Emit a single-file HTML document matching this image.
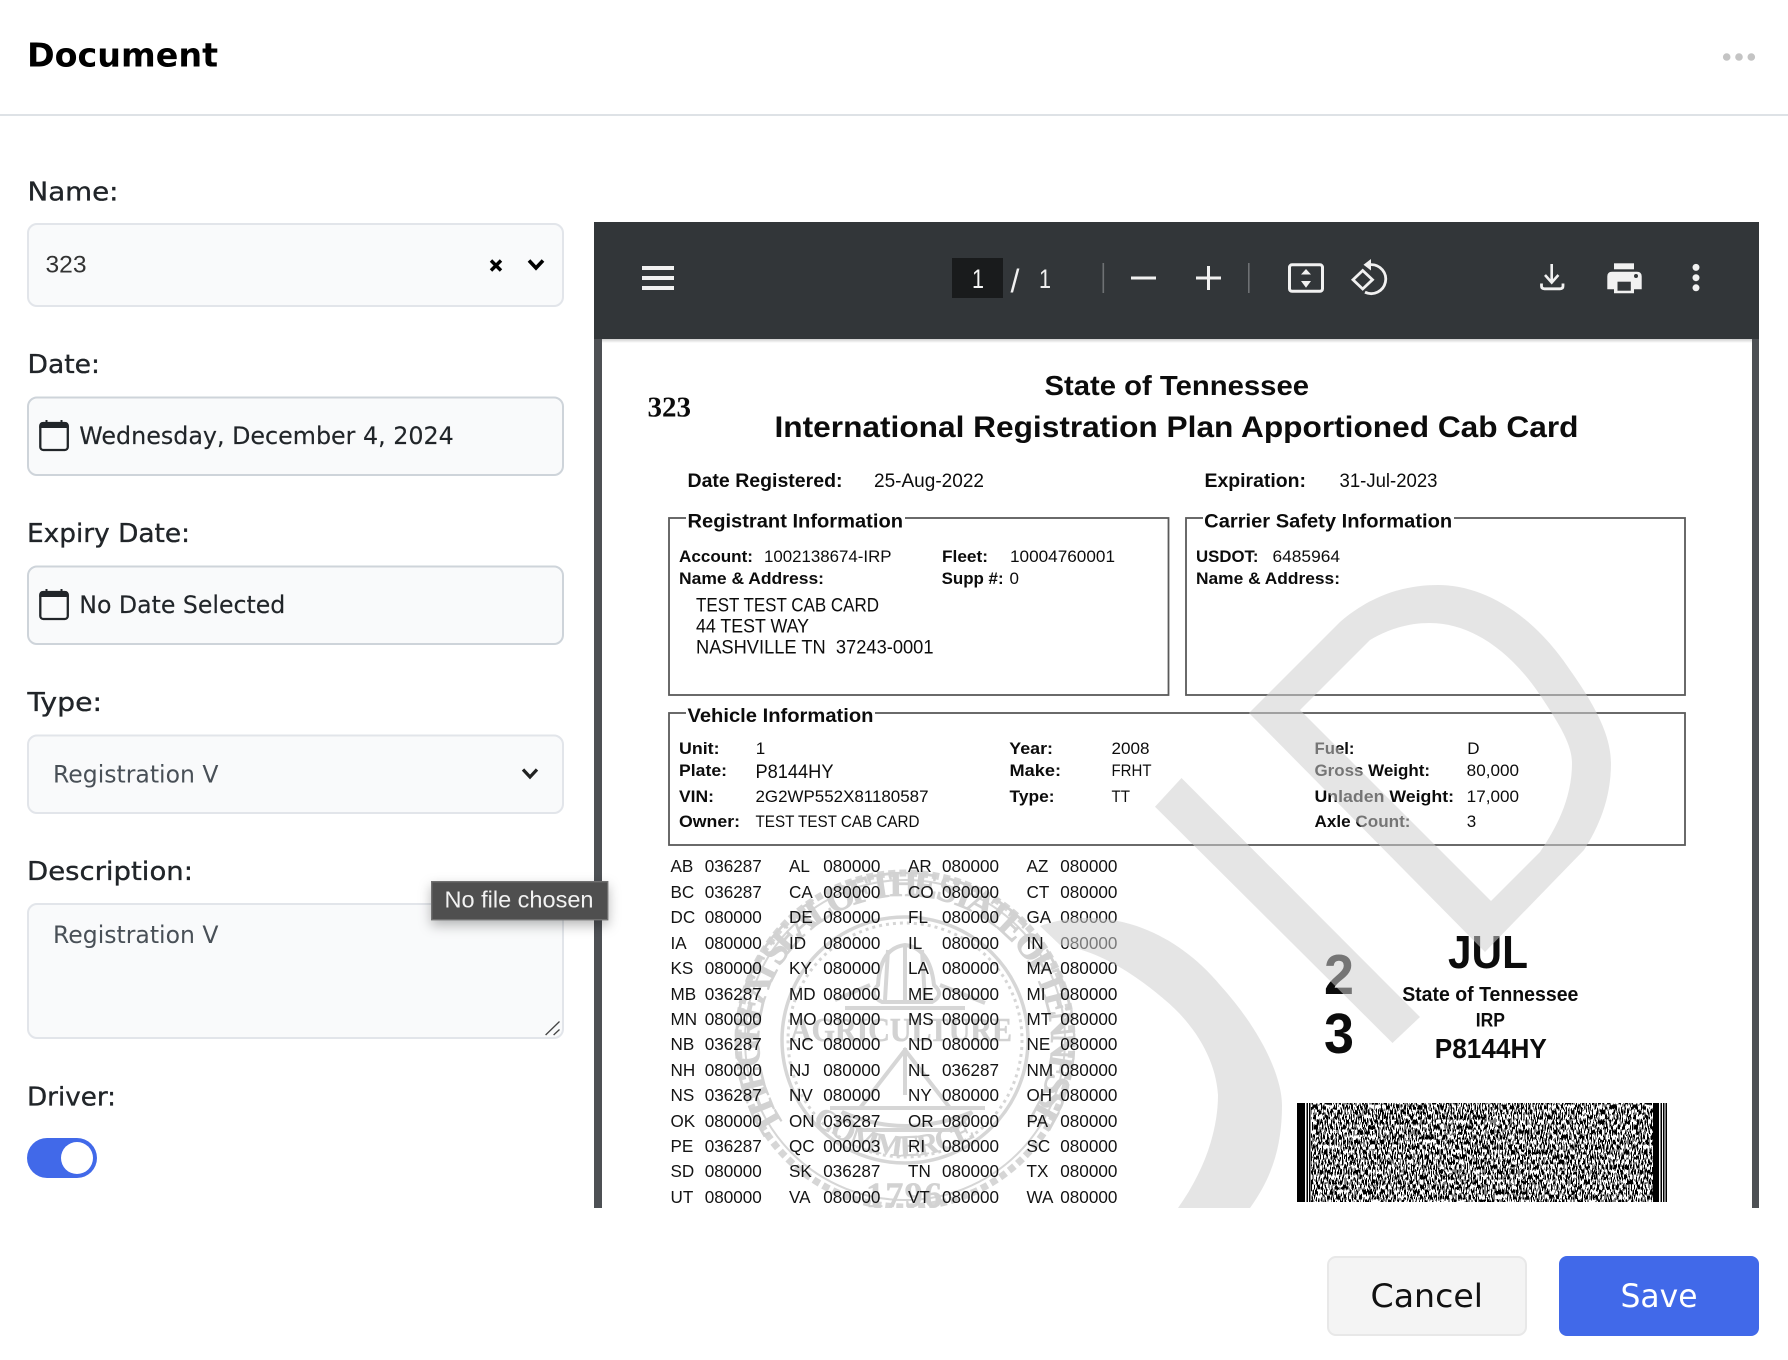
<!DOCTYPE html>
<html lang="en">
<head>
<meta charset="utf-8">
<title>Document</title>
<style>
html,body{margin:0;padding:0;background:#fff}
svg{display:block}
text{white-space:pre}
.u{font-family:"DejaVu Sans",sans-serif;fill:#212529}
.l{font-size:26px;stroke:#212529;stroke-width:.35px}
.m{stroke:#212529;stroke-width:.15px}
.p{font-family:"Liberation Sans",sans-serif;fill:#0c0c0c;font-size:17px}
.b{font-weight:700}
.t{font-family:"Liberation Sans",sans-serif;font-size:17.1px;fill:#141414}
</style>
</head>
<body>
<svg xmlns="http://www.w3.org/2000/svg" width="1788" height="1360" viewBox="0 0 1788 1360">
<defs>
<clipPath id="vc"><rect x="594" y="222" width="1165" height="986"/></clipPath>
<filter id="bc" x="0" y="0" width="1" height="1" color-interpolation-filters="sRGB">
<feTurbulence type="fractalNoise" baseFrequency="0.8 0.2" numOctaves="1" seed="7"/>
<feColorMatrix type="matrix" values="1 0 0 0 0 1 0 0 0 0 1 0 0 0 0 0 0 0 0 1"/>
<feComponentTransfer><feFuncR type="discrete" tableValues="0 1"/><feFuncG type="discrete" tableValues="0 1"/><feFuncB type="discrete" tableValues="0 1"/></feComponentTransfer>
</filter>
<filter id="ts" x="-20%" y="-40%" width="140%" height="200%"><feDropShadow dx="0" dy="5" stdDeviation="6" flood-color="#000" flood-opacity=".28"/></filter>
<linearGradient id="pg" x1="0" y1="0" x2="0" y2="1"><stop offset="0" stop-color="#cfcfcf"/><stop offset="1" stop-color="#fff"/></linearGradient>
<path id="sealp" d="M785 1125 A146 146 0 1 1 1025 1125"/>
<path id="sealb" d="M812 1122 Q905 1190 998 1122"/>
</defs>

<rect width="1788" height="1360" fill="#fff"/>

<!-- Header -->
<text class="u b" x="27" y="66.5" font-size="33" font-weight="700" style="fill:#000" textLength="191" lengthAdjust="spacingAndGlyphs">Document</text>
<circle cx="1726.7" cy="57" r="3.8" fill="#c4c4c4"/><circle cx="1739" cy="57" r="3.8" fill="#c4c4c4"/><circle cx="1751.3" cy="57" r="3.8" fill="#c4c4c4"/>
<rect x="0" y="114" width="1788" height="2" fill="#dee2e6"/>

<!-- Form -->
<text class="u l" x="27.5" y="200.5" textLength="91" lengthAdjust="spacingAndGlyphs">Name:</text>
<rect x="28" y="224" width="535" height="82" rx="9" fill="#f9fafb" stroke="#e2e5ea" stroke-width="2"/>
<text x="45.5" y="272.5" font-family="Liberation Sans,sans-serif" font-size="24" fill="#333" textLength="41" lengthAdjust="spacingAndGlyphs">323</text>
<path d="M491 260.5 L501 270.5 M501 260.5 L491 270.5" stroke="#000" stroke-width="3.4" fill="none"/>
<path d="M529 260.5 L536 268 L543 260.5" stroke="#000" stroke-width="3.6" fill="none"/>

<text class="u l" x="27.5" y="373.2" textLength="72.5" lengthAdjust="spacingAndGlyphs">Date:</text>
<rect x="28" y="397.5" width="535" height="77.5" rx="9" fill="#f9fafb" stroke="#ced4da" stroke-width="2"/>
<g fill="none" stroke="#212529">
<rect x="40.3" y="423" width="27.5" height="27" rx="3" stroke-width="2.3"/>
<path d="M39.3 426 Q39.3 422 43 422 L65 422 Q68.7 422 68.7 426 L68.7 428 L39.3 428 Z" fill="#212529" stroke="none"/>
<path d="M46.5 420 V423 M61.5 420 V423" stroke-width="2"/>
</g>
<text class="u m" x="79.3" y="444" font-size="24" textLength="374.5" lengthAdjust="spacingAndGlyphs">Wednesday, December 4, 2024</text>

<text class="u l" x="27" y="542.2" textLength="163" lengthAdjust="spacingAndGlyphs">Expiry Date:</text>
<rect x="28" y="566.5" width="535" height="77.5" rx="9" fill="#f9fafb" stroke="#ced4da" stroke-width="2"/>
<g fill="none" stroke="#212529">
<rect x="40.3" y="592" width="27.5" height="27" rx="3" stroke-width="2.3"/>
<path d="M39.3 595 Q39.3 591 43 591 L65 591 Q68.7 591 68.7 595 L68.7 597 L39.3 597 Z" fill="#212529" stroke="none"/>
<path d="M46.5 589 V592 M61.5 589 V592" stroke-width="2"/>
</g>
<text class="u m" x="79.3" y="613" font-size="24" textLength="206" lengthAdjust="spacingAndGlyphs">No Date Selected</text>

<text class="u l" x="27.5" y="711.2" textLength="74.5" lengthAdjust="spacingAndGlyphs">Type:</text>
<rect x="28" y="735.5" width="535" height="77.5" rx="9" fill="#f9fafb" stroke="#e2e5ea" stroke-width="2"/>
<text class="u" x="53" y="782.3" font-size="24" style="fill:#495057" textLength="165.5" lengthAdjust="spacingAndGlyphs">Registration V</text>
<path d="M523 769.5 L530 777 L537 769.5" stroke="#222" stroke-width="3.2" fill="none"/>

<text class="u l" x="27" y="880.2" textLength="166" lengthAdjust="spacingAndGlyphs">Description:</text>
<rect x="28" y="904" width="535" height="134" rx="9" fill="#f9fafb" stroke="#e2e5ea" stroke-width="2"/>
<text class="u" x="53" y="943" font-size="24" style="fill:#495057" textLength="165.5" lengthAdjust="spacingAndGlyphs">Registration V</text>
<path d="M545.6 1035 L559.5 1021.5 M553.6 1035 L559.5 1029.5" stroke="#444" stroke-width="1.3" fill="none"/>

<text class="u l" x="27" y="1105.5" textLength="89" lengthAdjust="spacingAndGlyphs">Driver:</text>
<rect x="27" y="1138" width="70" height="40" rx="20" fill="#4169e9"/>
<circle cx="77" cy="1158" r="16" fill="#fff"/>

<!-- PDF viewer -->
<rect x="594" y="222" width="1165" height="986" fill="#4d5054"/>
<rect x="594" y="222" width="1165" height="117" fill="#323639"/>
<rect x="602" y="339" width="1150" height="869" fill="#fff"/>
<rect x="602" y="339" width="1150" height="4" fill="url(#pg)"/>

<!-- Toolbar -->
<g fill="#f1f1f1">
<rect x="642" y="266" width="32" height="4"/><rect x="642" y="276" width="32" height="4"/><rect x="642" y="286" width="32" height="4"/>
<rect x="952" y="258" width="51" height="40" fill="#191b1c"/>
</g>
<text x="978" y="288" text-anchor="middle" font-family="Liberation Sans,sans-serif" font-size="27" fill="#f6f6f6" textLength="12" lengthAdjust="spacingAndGlyphs">1</text>
<text x="1015" y="292" text-anchor="middle" font-family="Liberation Sans,sans-serif" font-size="32" fill="#f1f1f1">/</text>
<text x="1045" y="288" text-anchor="middle" font-family="Liberation Sans,sans-serif" font-size="27" fill="#f1f1f1" textLength="12" lengthAdjust="spacingAndGlyphs">1</text>
<rect x="1102.5" y="263" width="1.6" height="30" fill="#6e7174"/>
<rect x="1248" y="263" width="1.6" height="30" fill="#6e7174"/>
<rect x="1131" y="276.5" width="25" height="3" fill="#f1f1f1"/>
<path d="M1196 278 H1221 M1208.5 266 V290" stroke="#f1f1f1" stroke-width="3" fill="none"/>
<rect x="1289.5" y="264.8" width="33" height="26.5" rx="2.5" fill="none" stroke="#f1f1f1" stroke-width="3"/>
<path d="M1306 269 L1311 274.5 H1301 Z M1306 287.7 L1311 281 H1301 Z" fill="#f1f1f1"/>
<path d="M1362.7 270.5 L1372.5 279.7 L1362.7 289 L1353 279.7 Z" fill="none" stroke="#f1f1f1" stroke-width="2.8"/>
<path d="M1371 264.6 A14.5 14.5 0 1 1 1365 292.2" fill="none" stroke="#f1f1f1" stroke-width="2.8"/>
<path d="M1371 259 V270.5 L1363.5 264.7 Z" fill="#f1f1f1"/>
<path d="M1551.7 264 V282 M1545 275 L1551.7 282.5 L1558.4 275" fill="none" stroke="#f1f1f1" stroke-width="2.6"/>
<path d="M1541.5 283.5 V286 Q1541.5 288.8 1544.5 288.8 H1560 Q1563 288.8 1563 286 V283.5" fill="none" stroke="#f1f1f1" stroke-width="2.8"/>
<rect x="1614" y="263.3" width="20" height="6" fill="#f1f1f1"/>
<path d="M1612 271.7 H1637 Q1641.7 271.7 1641.7 276.5 V289.3 H1634 V293.3 H1614 V289.3 H1607.3 V276.5 Q1607.3 271.7 1612 271.7 Z" fill="#f1f1f1"/>
<rect x="1617.5" y="281.7" width="13.3" height="9" fill="#323639"/>
<circle cx="1636" cy="276" r="2" fill="#323639"/>
<circle cx="1696" cy="267.4" r="3.5" fill="#f1f1f1"/><circle cx="1696" cy="277.7" r="3.5" fill="#f1f1f1"/><circle cx="1696" cy="287.8" r="3.5" fill="#f1f1f1"/>

<!-- Seal -->
<g clip-path="url(#vc)" fill="none" stroke="#d6d6d6">
<circle cx="905" cy="1040" r="167" stroke-width="7" stroke-dasharray="7 4"/>
<circle cx="905" cy="1040" r="160" stroke-width="2"/>
<circle cx="905" cy="1040" r="123" stroke-width="3.5"/>
<circle cx="905" cy="1040" r="117" stroke-width="3" stroke-dasharray="3 4"/>
<path d="M878 985 Q880 948 905 945 Q930 948 934 985 Q945 995 932 1002 H882 Q868 995 878 985 Z M888 950 L885 1000 M905 946 V1002 M922 950 L925 1000 M835 1000 L870 985 M940 985 L985 1003 M845 1008 H965 M905 1048 V1095 M905 1050 L950 1108 H860 Z M830 1108 H985 M842 1112 Q905 1140 972 1112 L955 1130 H860 Z" stroke-width="4"/>
<text x="0" y="0" font-family="Liberation Serif,serif" font-weight="700" font-size="36" fill="#d2d2d2" stroke="#d2d2d2" stroke-width=".8"><textPath href="#sealp" textLength="650" lengthAdjust="spacing">THE GREAT SEAL OF THE STATE OF TENNESSEE</textPath></text>
<text x="790" y="1041" font-family="Liberation Serif,serif" font-weight="700" font-size="34" fill="#d2d2d2" stroke="#d2d2d2" stroke-width=".6" textLength="222" lengthAdjust="spacingAndGlyphs">AGRICULTURE</text>
<text x="0" y="0" font-family="Liberation Serif,serif" font-weight="700" font-size="30" fill="#d2d2d2" stroke="#d2d2d2" stroke-width=".5"><textPath href="#sealb" textLength="175" lengthAdjust="spacing">COMMERCE</textPath></text>
<text x="866" y="1207" font-family="Liberation Serif,serif" font-weight="700" font-size="36" fill="#d2d2d2" stroke="#d2d2d2" stroke-width=".5" textLength="76" lengthAdjust="spacing">1796</text>
</g>

<!-- PDF text -->
<text x="647.5" y="416.7" font-family="Liberation Serif,serif" font-weight="700" font-size="29" fill="#0c0c0c" textLength="43.5" lengthAdjust="spacingAndGlyphs">323</text>
<text class="p b" x="1044.5" y="395" style="font-size:28px" textLength="264.5" lengthAdjust="spacingAndGlyphs">State of Tennessee</text>
<text class="p b" x="774.5" y="437" style="font-size:30px" textLength="804" lengthAdjust="spacingAndGlyphs">International Registration Plan Apportioned Cab Card</text>

<text class="p b" x="687.5" y="487" style="font-size:19.5px" textLength="155" lengthAdjust="spacingAndGlyphs">Date Registered:</text>
<text class="p" x="874" y="487" style="font-size:19.5px" textLength="110" lengthAdjust="spacingAndGlyphs">25-Aug-2022</text>
<text class="p b" x="1204.5" y="487" style="font-size:19.5px" textLength="101.5" lengthAdjust="spacingAndGlyphs">Expiration:</text>
<text class="p" x="1339.5" y="487" style="font-size:19.5px" textLength="98" lengthAdjust="spacingAndGlyphs">31-Jul-2023</text>

<g fill="none" stroke="#5a5a5a" stroke-width="1.8">
<rect x="669" y="518" width="499.5" height="177"/>
<rect x="1186" y="518" width="499" height="177"/>
<rect x="669" y="713" width="1016" height="132"/>
</g>
<rect x="686" y="510" width="219" height="16" fill="#fff"/>
<rect x="1203" y="510" width="251" height="16" fill="#fff"/>
<rect x="686" y="705" width="189" height="16" fill="#fff"/>

<text class="p b" x="687.5" y="527.3" style="font-size:19.5px" textLength="215.5" lengthAdjust="spacingAndGlyphs">Registrant Information</text>
<text class="p b" x="1204.2" y="527.3" style="font-size:19.5px" textLength="248" lengthAdjust="spacingAndGlyphs">Carrier Safety Information</text>
<text class="p b" x="687.5" y="722" style="font-size:19.5px" textLength="186" lengthAdjust="spacingAndGlyphs">Vehicle Information</text>

<text class="p b" x="679" y="562" textLength="74" lengthAdjust="spacingAndGlyphs">Account:</text>
<text class="p" x="764" y="562" textLength="127.5" lengthAdjust="spacingAndGlyphs">1002138674-IRP</text>
<text class="p b" x="942" y="562" textLength="46" lengthAdjust="spacingAndGlyphs">Fleet:</text>
<text class="p" x="1010" y="562" textLength="105" lengthAdjust="spacingAndGlyphs">10004760001</text>
<text class="p b" x="679" y="584" textLength="145" lengthAdjust="spacingAndGlyphs">Name &amp; Address:</text>
<text class="p b" x="941.6" y="584" textLength="62" lengthAdjust="spacingAndGlyphs">Supp #:</text>
<text class="p" x="1009.5" y="584">0</text>
<text class="p" x="696" y="611.5" style="font-size:19px" textLength="183" lengthAdjust="spacingAndGlyphs">TEST TEST CAB CARD</text>
<text class="p" x="696" y="632.5" style="font-size:19px" textLength="113" lengthAdjust="spacingAndGlyphs">44 TEST WAY</text>
<text class="p" x="696" y="653.5" style="font-size:19px" textLength="237.5" lengthAdjust="spacingAndGlyphs">NASHVILLE TN  37243-0001</text>

<text class="p b" x="1196" y="562" textLength="62.5" lengthAdjust="spacingAndGlyphs">USDOT:</text>
<text class="p" x="1272.5" y="562" textLength="67.5" lengthAdjust="spacingAndGlyphs">6485964</text>
<text class="p b" x="1196" y="584" textLength="144" lengthAdjust="spacingAndGlyphs">Name &amp; Address:</text>

<text class="p b" x="679" y="754" textLength="40.5" lengthAdjust="spacingAndGlyphs">Unit:</text>
<text class="p" x="755.8" y="754">1</text>
<text class="p b" x="679" y="776" textLength="48" lengthAdjust="spacingAndGlyphs">Plate:</text>
<text class="p" x="755.5" y="778" style="font-size:19px" textLength="78" lengthAdjust="spacingAndGlyphs">P8144HY</text>
<text class="p b" x="679" y="802" textLength="35" lengthAdjust="spacingAndGlyphs">VIN:</text>
<text class="p" x="755.5" y="802" textLength="173" lengthAdjust="spacingAndGlyphs">2G2WP552X81180587</text>
<text class="p b" x="679" y="827" textLength="61" lengthAdjust="spacingAndGlyphs">Owner:</text>
<text class="p" x="755.5" y="827" textLength="164" lengthAdjust="spacingAndGlyphs">TEST TEST CAB CARD</text>
<text class="p b" x="1009.3" y="754" textLength="43.7" lengthAdjust="spacingAndGlyphs">Year:</text>
<text class="p" x="1111.5" y="754" textLength="38" lengthAdjust="spacingAndGlyphs">2008</text>
<text class="p b" x="1009.5" y="776" textLength="51.5" lengthAdjust="spacingAndGlyphs">Make:</text>
<text class="p" x="1111.5" y="776" textLength="40" lengthAdjust="spacingAndGlyphs">FRHT</text>
<text class="p b" x="1009.5" y="802" textLength="45" lengthAdjust="spacingAndGlyphs">Type:</text>
<text class="p" x="1111.5" y="802" textLength="18.5" lengthAdjust="spacingAndGlyphs">TT</text>
<text class="p b" x="1314.5" y="754" textLength="40" lengthAdjust="spacingAndGlyphs">Fuel:</text>
<text class="p" x="1467.2" y="754">D</text>
<text class="p b" x="1314.5" y="776" textLength="115.5" lengthAdjust="spacingAndGlyphs">Gross Weight:</text>
<text class="p" x="1466.7" y="776" textLength="52.3" lengthAdjust="spacingAndGlyphs">80,000</text>
<text class="p b" x="1314.5" y="802" textLength="139.5" lengthAdjust="spacingAndGlyphs">Unladen Weight:</text>
<text class="p" x="1466.7" y="802" textLength="52.3" lengthAdjust="spacingAndGlyphs">17,000</text>
<text class="p b" x="1314.5" y="827" textLength="96" lengthAdjust="spacingAndGlyphs">Axle Count:</text>
<text class="p" x="1466.7" y="827">3</text>

<!-- State table -->
<g class="t">
<text class="t" y="872"><tspan x="670.5">AB</tspan><tspan x="704.7">036287</tspan><tspan x="789">AL</tspan><tspan x="823.3">080000</tspan><tspan x="908">AR</tspan><tspan x="942">080000</tspan><tspan x="1026.5">AZ</tspan><tspan x="1060.3">080000</tspan></text>
<text class="t" y="898"><tspan x="670.5">BC</tspan><tspan x="704.7">036287</tspan><tspan x="789">CA</tspan><tspan x="823.3">080000</tspan><tspan x="908">CO</tspan><tspan x="942">080000</tspan><tspan x="1026.5">CT</tspan><tspan x="1060.3">080000</tspan></text>
<text class="t" y="923"><tspan x="670.5">DC</tspan><tspan x="704.7">080000</tspan><tspan x="789">DE</tspan><tspan x="823.3">080000</tspan><tspan x="908">FL</tspan><tspan x="942">080000</tspan><tspan x="1026.5">GA</tspan><tspan x="1060.3">080000</tspan></text>
<text class="t" y="949"><tspan x="670.5">IA</tspan><tspan x="704.7">080000</tspan><tspan x="789">ID</tspan><tspan x="823.3">080000</tspan><tspan x="908">IL</tspan><tspan x="942">080000</tspan><tspan x="1026.5">IN</tspan><tspan x="1060.3">080000</tspan></text>
<text class="t" y="974"><tspan x="670.5">KS</tspan><tspan x="704.7">080000</tspan><tspan x="789">KY</tspan><tspan x="823.3">080000</tspan><tspan x="908">LA</tspan><tspan x="942">080000</tspan><tspan x="1026.5">MA</tspan><tspan x="1060.3">080000</tspan></text>
<text class="t" y="1000"><tspan x="670.5">MB</tspan><tspan x="704.7">036287</tspan><tspan x="789">MD</tspan><tspan x="823.3">080000</tspan><tspan x="908">ME</tspan><tspan x="942">080000</tspan><tspan x="1026.5">MI</tspan><tspan x="1060.3">080000</tspan></text>
<text class="t" y="1025"><tspan x="670.5">MN</tspan><tspan x="704.7">080000</tspan><tspan x="789">MO</tspan><tspan x="823.3">080000</tspan><tspan x="908">MS</tspan><tspan x="942">080000</tspan><tspan x="1026.5">MT</tspan><tspan x="1060.3">080000</tspan></text>
<text class="t" y="1050"><tspan x="670.5">NB</tspan><tspan x="704.7">036287</tspan><tspan x="789">NC</tspan><tspan x="823.3">080000</tspan><tspan x="908">ND</tspan><tspan x="942">080000</tspan><tspan x="1026.5">NE</tspan><tspan x="1060.3">080000</tspan></text>
<text class="t" y="1076"><tspan x="670.5">NH</tspan><tspan x="704.7">080000</tspan><tspan x="789">NJ</tspan><tspan x="823.3">080000</tspan><tspan x="908">NL</tspan><tspan x="942">036287</tspan><tspan x="1026.5">NM</tspan><tspan x="1060.3">080000</tspan></text>
<text class="t" y="1101"><tspan x="670.5">NS</tspan><tspan x="704.7">036287</tspan><tspan x="789">NV</tspan><tspan x="823.3">080000</tspan><tspan x="908">NY</tspan><tspan x="942">080000</tspan><tspan x="1026.5">OH</tspan><tspan x="1060.3">080000</tspan></text>
<text class="t" y="1127"><tspan x="670.5">OK</tspan><tspan x="704.7">080000</tspan><tspan x="789">ON</tspan><tspan x="823.3">036287</tspan><tspan x="908">OR</tspan><tspan x="942">080000</tspan><tspan x="1026.5">PA</tspan><tspan x="1060.3">080000</tspan></text>
<text class="t" y="1152"><tspan x="670.5">PE</tspan><tspan x="704.7">036287</tspan><tspan x="789">QC</tspan><tspan x="823.3">000003</tspan><tspan x="908">RI</tspan><tspan x="942">080000</tspan><tspan x="1026.5">SC</tspan><tspan x="1060.3">080000</tspan></text>
<text class="t" y="1177"><tspan x="670.5">SD</tspan><tspan x="704.7">080000</tspan><tspan x="789">SK</tspan><tspan x="823.3">036287</tspan><tspan x="908">TN</tspan><tspan x="942">080000</tspan><tspan x="1026.5">TX</tspan><tspan x="1060.3">080000</tspan></text>
<text class="t" y="1203"><tspan x="670.5">UT</tspan><tspan x="704.7">080000</tspan><tspan x="789">VA</tspan><tspan x="823.3">080000</tspan><tspan x="908">VT</tspan><tspan x="942">080000</tspan><tspan x="1026.5">WA</tspan><tspan x="1060.3">080000</tspan></text>
</g>

<!-- Right block -->
<text class="p b" x="1324" y="994" style="font-size:57px" textLength="30" lengthAdjust="spacingAndGlyphs">2</text>
<text class="p b" x="1324" y="1053" style="font-size:57px" textLength="30" lengthAdjust="spacingAndGlyphs">3</text>
<text class="p b" x="1448" y="968" style="font-size:46px" textLength="80" lengthAdjust="spacingAndGlyphs">JUL</text>
<text class="p b" x="1402.2" y="1001" style="font-size:20px" textLength="176.2" lengthAdjust="spacingAndGlyphs">State of Tennessee</text>
<text class="p b" x="1475.8" y="1026.7" style="font-size:19px" textLength="29.2" lengthAdjust="spacingAndGlyphs">IRP</text>
<text class="p b" x="1434.8" y="1058" style="font-size:28px" textLength="112" lengthAdjust="spacingAndGlyphs">P8144HY</text>

<!-- Barcode -->
<rect x="1297" y="1103" width="8" height="99" fill="#000"/>
<rect x="1306.5" y="1103" width="1.5" height="99" fill="#000"/>
<rect x="1309" y="1103" width="1.5" height="99" fill="#000"/>
<rect x="1311" y="1103" width="342" height="99" filter="url(#bc)"/>
<rect x="1653" y="1103" width="6" height="99" fill="#000"/>
<rect x="1660.5" y="1103" width="1.5" height="99" fill="#000"/>
<rect x="1663" y="1103" width="1.5" height="99" fill="#000"/>
<rect x="1665.5" y="1103" width="1.5" height="99" fill="#000"/>

<!-- Watermark VOID overlay -->
<g clip-path="url(#vc)" fill="rgb(207,207,207)" fill-opacity=".54">
<path fill-rule="evenodd" d="M1249 713 L1340 622 C1375 592 1410 585 1438 585 C1480 585 1530 610 1570 670 C1600 712 1611 740 1611 763 C1611 800 1598 828 1584 850 L1485 952 Z M1300 710 L1370 640 C1390 628 1410 623 1430 623 C1470 623 1510 650 1540 695 C1560 725 1572 745 1572 763 C1572 800 1555 830 1540 852 L1491 901 Z"/>
<path d="M1181.5 778 L1420 1017 L1392.5 1043 L1155 806.7 Z"/>
<path d="M1040 926 C1100 905 1170 925 1220 985 C1265 1035 1282 1080 1282 1105 C1282 1150 1270 1180 1250 1208 L1178 1208 C1205 1170 1218 1130 1218 1095 C1216 1060 1195 1025 1165 1000 C1130 970 1095 950 1060 945 Z"/>
</g>

<!-- Tooltip -->
<rect x="431.7" y="881.7" width="176" height="38" fill="#505050" stroke="#6f6f6f" stroke-width="1.4" filter="url(#ts)"/>
<text x="444.5" y="907.5" font-family="Liberation Sans,sans-serif" font-size="23" fill="#f2f2f2" textLength="149" lengthAdjust="spacingAndGlyphs">No file chosen</text>

<!-- Buttons -->
<rect x="1328" y="1257" width="198" height="78" rx="8" fill="#f4f4f4" stroke="#e8e8e8" stroke-width="2"/>
<text class="u" x="1370.5" y="1307" font-size="32" style="fill:#111" textLength="112.5" lengthAdjust="spacingAndGlyphs">Cancel</text>
<rect x="1559" y="1256" width="200" height="80" rx="8" fill="#4169e9"/>
<text class="u" x="1620.5" y="1307" font-size="32" style="fill:#fff" textLength="77" lengthAdjust="spacingAndGlyphs">Save</text>
</svg>
</body>
</html>
